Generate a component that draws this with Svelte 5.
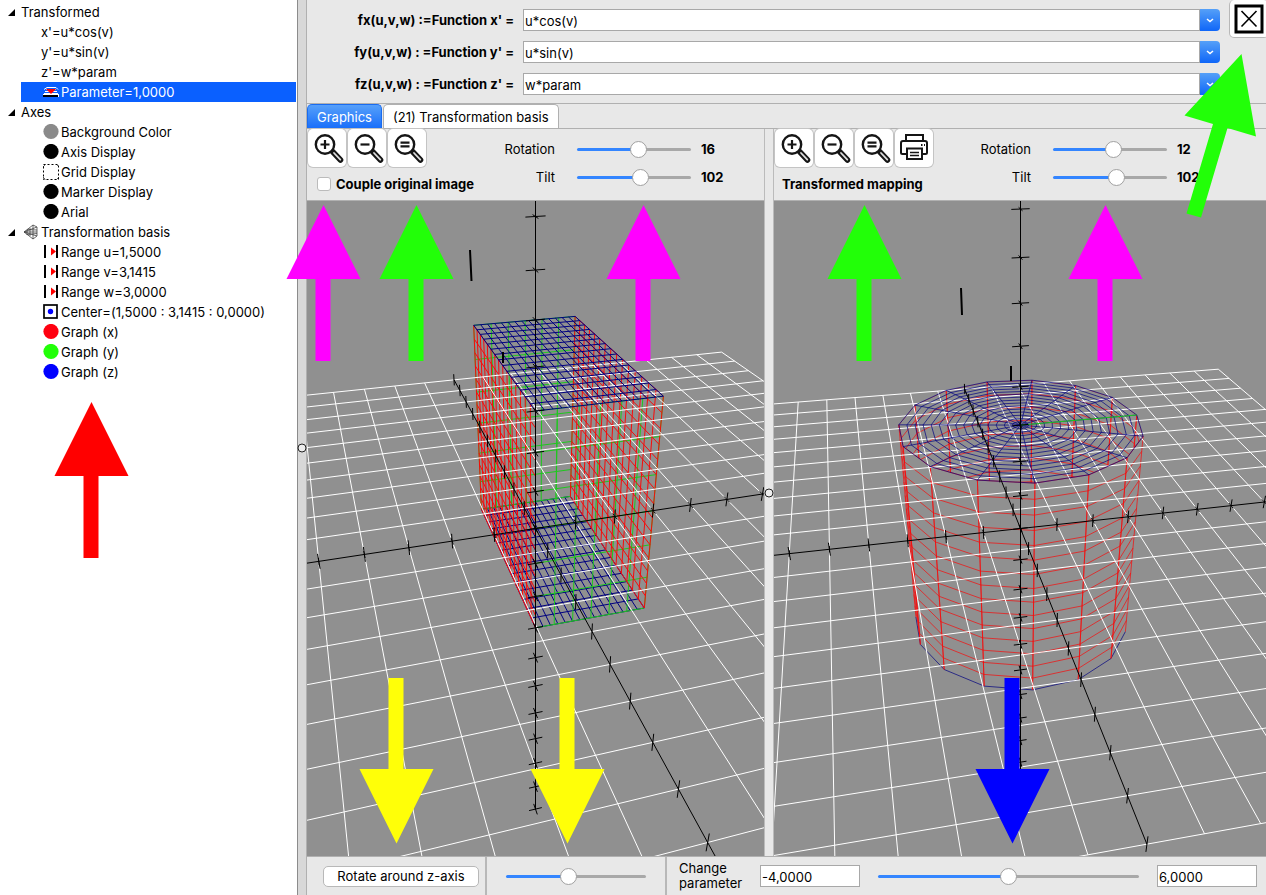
<script>
    let functions = [
        { id: 'fx', label: "fx(u,v,w) :=Function x' =", value: 'u*cos(v)' },
        { id: 'fy', label: "fy(u,v,w) : =Function y' =", value: 'u*sin(v)' },
        { id: 'fz', label: "fz(u,v,w) : =Function z' =", value: 'w*param' }
    ]

    let tree = [
        { text: 'Transformed', level: 0 },
        { text: "x'=u*cos(v)", level: 1 },
        { text: "y'=u*sin(v)", level: 1 },
        { text: "z'=w*param", level: 1 },
        { text: 'Parameter=1,0000', level: 1, icon: 'param', selected: true },
        { text: 'Axes', level: 0 },
        { text: 'Background Color', level: 1, icon: 'dot', color: '#8a8a8a' },
        { text: 'Axis Display', level: 1, icon: 'dot', color: '#000' },
        { text: 'Grid Display', level: 1, icon: 'grid' },
        { text: 'Marker Display', level: 1, icon: 'dot', color: '#000' },
        { text: 'Arial', level: 1, icon: 'dot', color: '#000' },
        { text: 'Transformation basis', level: 0, icon: 'basis' },
        { text: 'Range u=1,5000', level: 1, icon: 'range' },
        { text: 'Range v=3,1415', level: 1, icon: 'range' },
        { text: 'Range w=3,0000', level: 1, icon: 'range' },
        { text: 'Center=(1,5000 : 3,1415 : 0,0000)', level: 1, icon: 'center' },
        { text: 'Graph (x)', level: 1, icon: 'dot', color: '#ff0010' },
        { text: 'Graph (y)', level: 1, icon: 'dot', color: '#22ff08' },
        { text: 'Graph (z)', level: 1, icon: 'dot', color: '#0000ff' }
    ]

    let views = $state([
        { id: 'original', title: 'Couple original image', rotation: 16, tilt: 102 },
        { id: 'mapped', title: 'Transformed mapping', rotation: 12, tilt: 102 }
    ])
    let coupled = $state(false)
    let spin = $state(44)
    let param = $state(1)

    // central projection: each axis has a screen direction and a depth factor
    const cameras = {
        original: { o: [228.5, 327.5], x: [40.65, -6.17, 0.01242], y: [11.68, 21.3, -0.04328], z: [0, -35.88, -0.02786] },
        mapped: { o: [246.5, 327.5], x: [36.73, -3.99, 0.00779], y: [7.75, 19.35, -0.0387], z: [0, -31.86, -0.02526] }
    }

    function project(cam, x, y, z) {
        const d = 1 + cam.x[2] * x + cam.y[2] * y + cam.z[2] * z
        return [
            cam.o[0] + (cam.x[0] * x + cam.y[0] * y + cam.z[0] * z) / d,
            cam.o[1] + (cam.x[1] * x + cam.y[1] * y + cam.z[1] * z) / d
        ]
    }

    function path(cam, points) {
        return 'M' + points.map((p) => project(cam, ...p).map((n) => n.toFixed(1)).join(' ')).join('L')
    }

    const steps = (from, to, n) => Array.from({ length: n + 1 }, (_, i) => from + ((to - from) * i) / n)

    function gridPath(cam) {
        return steps(-10, 10, 20)
            .filter((t) => t != 0)
            .map((t) => path(cam, [[t, -10, 0], [t, 10, 0]]) + path(cam, [[-10, t, 0], [10, t, 0]]))
            .join('')
    }

    function axesPath(cam) {
        let d = path(cam, [[-10, 0, 0], [10, 0, 0]]) + path(cam, [[0, -10, 0], [0, 10, 0]]) + path(cam, [[0, 0, -10], [0, 0, 10]])
        for (let t = -10; t <= 10; t++) {
            d += path(cam, [[t, 0, -0.2], [t, 0, 0.2]])
            d += path(cam, [[0, t, -0.2], [0, t, 0.2]])
            d += path(cam, [[-0.2, 0, t], [0.2, 0, t]])
            d += path(cam, [[t, -0.15, 0], [t, 0.15, 0]])
            d += path(cam, [[0, -0.2, t], [0, 0.2, t]])
        }
        return d
    }

    function boxPaths(cam) {
        const us = steps(0, 3, 15)
        const vs = steps(0, -2 * Math.PI, 15)
        const ws = steps(-3, 3, 15)
        const far = -2 * Math.PI
        const lid = (z) => us.map((u) => path(cam, [[u, 0, z], [u, far, z]])).join('') + vs.map((v) => path(cam, [[0, v, z], [3, v, z]])).join('')
        const wall = (u) => vs.map((v) => path(cam, [[u, v, -3], [u, v, 3]])).join('') + ws.map((w) => path(cam, [[u, 0, w], [u, far, w]])).join('')
        const face = (v) => steps(0, 3, 6).map((u) => path(cam, [[u, v, -3], [u, v, 3]])).join('') + steps(-3, 3, 6).map((w) => path(cam, [[0, v, w], [3, v, w]])).join('')
        return { bottom: lid(-3), top: lid(3), walls: wall(0) + wall(3), faces: face(0) + face(far) }
    }

    function cylinderPaths(cam) {
        const n = 15
        const at = (i, u, w) => {
            const v = (2 * Math.PI * i) / n
            return [u * Math.cos(v), -u * Math.sin(v), w]
        }
        const ring = (u, w) => path(cam, steps(0, n, n).map((i) => at(i, u, w)))
        let lid = ''
        let front = ''
        let back = ''
        let rim = ''
        for (const u of steps(0.2, 3, 14)) lid += ring(u, 3)
        for (let i = 0; i < n; i++) {
            lid += path(cam, [at(0, 0, 3), at(i, 3, 3)])
            const a = project(cam, ...at(i, 3, 3))
            const b = project(cam, ...at(i + 1, 3, 3))
            const c = project(cam, ...at(i, 3, -3))
            const facing = (b[0] - a[0]) * (c[1] - a[1]) - (b[1] - a[1]) * (c[0] - a[0]) > 0
            let side = path(cam, [at(i, 3, 3), at(i, 3, -3)]) + path(cam, [at(i + 1, 3, 3), at(i + 1, 3, -3)])
            for (const w of steps(-2.6, 3, 14)) side += path(cam, [at(i, 3, w), at(i + 1, 3, w)])
            if (facing) {
                front += side
                rim += path(cam, [at(i, 3, -3), at(i + 1, 3, -3)])
            } else {
                back += side
            }
        }
        return { lid, front, back, rim, outline: ring(3, 3) + 'Z', seam: path(cam, [[0, 0, 3], [3, 0, 3]]) }
    }

    const box = boxPaths(cameras.original)
    const cylinder = cylinderPaths(cameras.mapped)

    let arrows = [
        { x: 286, y: 205, color: '#ff00ff', dir: 'up' },
        { x: 379, y: 205, color: '#22ff08', dir: 'up' },
        { x: 606, y: 205, color: '#ff00ff', dir: 'up' },
        { x: 827, y: 205, color: '#22ff08', dir: 'up' },
        { x: 1068, y: 205, color: '#ff00ff', dir: 'up' },
        { x: 54, y: 402, color: '#ff0000', dir: 'up' },
        { x: 359, y: 678, color: '#ffff08', dir: 'down' },
        { x: 530, y: 678, color: '#ffff08', dir: 'down' },
        { x: 975, y: 678, color: '#0000ff', dir: 'down' }
    ]
</script>

{#snippet lens(sign)}
    <svg width="38" height="38" viewBox="0 0 38 38" fill="none" stroke="#151515">
        <path d="M24.5 22.5L32.5 31" stroke-width="5.6" stroke-linecap="round" />
        <path d="M26 24L32.3 30.7" stroke="#ddd" stroke-width="1.8" stroke-linecap="round" />
        <circle cx="17" cy="15.5" r="9.2" stroke-width="2.4" fill="#fff" />
        {#if sign == 'plus'}
            <path d="M12.5 15.5h9M17 11v9" stroke-width="2.2" />
        {:else if sign == 'minus'}
            <path d="M12.5 15.5h9" stroke-width="2.2" />
        {:else}
            <path d="M12.5 13.7h9M12.5 17.3h9" stroke-width="2.2" />
        {/if}
    </svg>
{/snippet}

{#snippet slider(label, view, key, min, max)}
    <label for="{view.id}-{key}">{label}</label>
    <input type="range" id="{view.id}-{key}" {min} {max} bind:value={view[key]} style="--fill: {((view[key] - min) / (max - min)) * 100}%">
    <output for="{view.id}-{key}">{view[key]}</output>
{/snippet}

<div class="app">
    <aside>
        <ul>
            {#each tree as node}
                <li class:root={node.level == 0} class:selected={node.selected}>
                    {#if node.level == 0}
                        <svg class="twisty" width="7" height="7" viewBox="0 0 7 7"><path d="M7 0V7H0z" /></svg>
                    {/if}
                    <span class="node">
                        {#if node.icon}
                            <svg class="icon" width="16" height="16" viewBox="0 0 16 16">
                                {#if node.icon == 'dot'}
                                    <circle cx="8" cy="7.5" r="7.6" fill={node.color} />
                                {:else if node.icon == 'param'}
                                    <path d="M1 9.500h14M2 7.500h12M3 5.500h10M1 5.500L4 3.500h9l2 2" fill="none" stroke="#fff" stroke-width="1" />
                                    <path d="M3 5h10L8 10z" fill="#f00" />
                                    <path d="M0 10h16v3H0z" fill="#fff" />
                                    <path d="M0 11h15v2H0z" fill="#000" />
                                {:else if node.icon == 'grid'}
                                    <rect x="0.500" y="0.500" width="15" height="15" fill="none" stroke="#000" stroke-dasharray="2 2" />
                                    <path d="M0 3L3 0M13 0l3 3M0 13l3 3M16 13l-3 3" stroke="#000" stroke-dasharray="1 1" />
                                {:else if node.icon == 'basis'}
                                    <path d="M1 8L10 1 14 3V12L10 15zM1 8h13M4 6v5M7 4v8M10 1v14M1 8L14 3M1 8L14 12M4 5.600L14 6M4 10.500L14 9.500" fill="none" stroke="#444" stroke-width="0.800" />
                                {:else if node.icon == 'range'}
                                    <path d="M2 1v13M14 1v13" stroke="#000" stroke-width="2" />
                                    <path d="M8 3.500L13 7.500 8 11.500z" fill="#f00" />
                                {:else}
                                    <rect x="1" y="1" width="13" height="13" fill="#fff" stroke="#000" stroke-width="1.700" />
                                    <circle cx="7.500" cy="7.500" r="2.700" fill="#00f" />
                                {/if}
                            </svg>
                        {/if}
                        {node.text}
                    </span>
                </li>
            {/each}
        </ul>
    </aside>
    <div class="splitter"><span class="grip"></span></div>

    <main>
        <header>
            <form>
                {#each functions as fn}
                    <label for={fn.id}>{fn.label}</label>
                    <div class="combo">
                        <input type="text" id={fn.id} bind:value={fn.value}>
                        <button type="button" aria-label="Choose function">
                            <svg width="8" height="5" viewBox="0 0 8 5"><path d="M1 1l3 2.500L7 1" fill="none" stroke="#fff" stroke-width="1.500" /></svg>
                        </button>
                    </div>
                {/each}
            </form>
            <button class="close" aria-label="Close">
                <svg width="30" height="30" viewBox="0 0 30 30" fill="none" stroke="#000">
                    <rect x="2" y="2" width="26" height="26" stroke-width="3" />
                    <path d="M7.500 7L22.500 22.500M22.500 7L7.500 22.500" stroke-width="1.600" />
                </svg>
            </button>
        </header>

        <nav>
            <button class="tab active">Graphics</button>
            <button class="tab">(21) Transformation basis</button>
        </nav>

        <div class="views">
            {#each views as view}
                {@const cam = cameras[view.id]}
                <section class={view.id}>
                    <div class="toolbar">
                        <div class="tools">
                            <div class="buttons">
                                <button aria-label="Zoom in">{@render lens('plus')}</button>
                                <button aria-label="Zoom out">{@render lens('minus')}</button>
                                <button aria-label="Reset zoom">{@render lens('equal')}</button>
                                {#if view.id == 'mapped'}
                                    <button aria-label="Print">
                                        <svg width="38" height="38" viewBox="0 0 38 38" fill="none" stroke="#151515" stroke-width="2">
                                            <path d="M11 12V6h17v6" />
                                            <path d="M11 25H7.500q-1.500 0-1.500-1.500V14q0-2 2-2h22q2 0 2 2v9.500q0 1.500-1.500 1.500H28" />
                                            <path d="M12 19.500h15v10.500H12z" />
                                            <path d="M15 23.500h9M15 26.500h9" stroke-width="1.600" />
                                            <path d="M26 16h1.500M29 16h1" />
                                        </svg>
                                    </button>
                                {/if}
                            </div>
                            {#if view.id == 'original'}
                                <label class="title"><input type="checkbox" bind:checked={coupled}>{view.title}</label>
                            {:else}
                                <span class="title">{view.title}</span>
                            {/if}
                        </div>
                        <div class="sliders">
                            {@render slider('Rotation', view, 'rotation', -180, 180)}
                            {@render slider('Tilt', view, 'tilt', 0, 180)}
                        </div>
                    </div>
                    <div class="canvas">
                        {#if view.id == 'original'}
                            <svg viewBox="0 0 457 655" preserveAspectRatio="xMidYMid slice" fill="none">
                                <path class="blue" d={box.bottom} />
                                <path class="green" d={box.faces} />
                                <path class="red" d={box.walls} />
                                <path class="grid" d={gridPath(cam)} />
                                <path class="blue" d={box.top} />
                                <path class="axis" d={axesPath(cam)} />
                                <path class="axis bold" d="M163 49L164.500 80M196 151V162" />
                            </svg>
                        {:else}
                            <svg viewBox="0 0 492 655" preserveAspectRatio="xMidYMid slice" fill="none">
                                <clipPath id="lid"><path d={cylinder.outline} /></clipPath>
                                <path class="red" d={cylinder.back} clip-path="url(#lid)" />
                                <path class="blue" d={cylinder.rim} />
                                <path class="red" d={cylinder.front} />
                                <path class="grid" d={gridPath(cam)} />
                                <path class="blue" d={cylinder.lid} />
                                <path class="green" d={cylinder.seam} />
                                <path class="axis" d={axesPath(cam)} />
                                <path class="axis bold" d="M187 87L188 114M237 165V180" />
                            </svg>
                        {/if}
                    </div>
                </section>
                {#if view.id == 'original'}
                    <div class="divider"><span class="grip"></span></div>
                {/if}
            {/each}
        </div>

        <footer>
            <div class="cell">
                <button class="rotate">Rotate around z-axis</button>
            </div>
            <div class="cell">
                <input type="range" aria-label="Rotation angle" bind:value={spin} style="--fill: {spin}%">
            </div>
            <div class="cell change">
                <label for="param">Change parameter</label>
                <input type="text" aria-label="Minimum" value="-4,0000">
                <input type="range" id="param" min="-4" max="6" step="0.1" bind:value={param} style="--fill: {(param + 4) * 10}%">
                <input type="text" aria-label="Maximum" value="6,0000">
            </div>
        </footer>
    </main>

    {#each arrows as arrow}
        <svg class="arrow" width="75" height="166" style="left: {arrow.x}px; top: {arrow.y}px" fill={arrow.color}>
            {#if arrow.dir == 'up'}
                <path d="M37.500 0L74.500 74H44.500V156H29.500V74H0.500z" />
            {:else}
                <path d="M29.500 0H44.500V91H74.500L37.500 165.500L0.500 91H29.500z" />
            {/if}
        </svg>
    {/each}
    <svg class="arrow" width="74" height="166" style="left: 1184px; top: 53px" fill="#22ff08">
        <path d="M57.500 1L72 83.500L43.500 75L17 164.500L2.500 160.500L29 71L0.500 62.500z" />
    </svg>
</div>

<style>
    :global(body) {
        margin: 0;
        overflow: hidden;
    }

    .app {
        position: relative;
        display: flex;
        height: 100vh;
        overflow: hidden;
        background: #e8e8e8;
        color: #000;
        font-family: Inter, "Liberation Sans", sans-serif;
        font-size: 13px;
    }

    button, input {
        box-sizing: border-box;
        margin: 0;
        padding: 0;
        font: inherit;
        color: inherit;
    }

    svg {
        display: block;
    }

    aside {
        flex: 0 0 297px;
        background: #fff;
        border-right: 1px solid #8c8c8c;
    }

    ul {
        margin: 0;
        padding: 2px 1px 0 0;
        list-style: none;
    }

    li {
        display: flex;
        align-items: center;
        height: 20px;
        margin-left: 21px;
        padding-left: 20px;
        white-space: nowrap;
    }

    li.root {
        margin-left: 8px;
        padding-left: 0;
        gap: 6px;
    }

    li.selected {
        background: #0a60ff;
        color: #fff;
    }

    .node {
        display: flex;
        align-items: center;
        gap: 2px;
        line-height: 20px;
    }

    .icon {
        margin-left: 2px;
    }

    .splitter {
        position: relative;
        flex: 0 0 8px;
        background: #d8d8d8;
    }

    .grip {
        position: absolute;
        left: 50%;
        top: 50%;
        z-index: 2;
        width: 7px;
        height: 7px;
        border: 1px solid #222;
        border-radius: 50%;
        background: #eee;
        transform: translate(-50%, -50%);
    }

    main {
        flex: 1;
        display: flex;
        flex-direction: column;
        min-width: 0;
        border-left: 1px solid #b0b0b0;
    }

    header {
        display: flex;
        align-items: flex-start;
        gap: 9px;
        height: 103px;
        border-bottom: 1px solid #b0b0b0;
    }

    form {
        flex: 1;
        display: grid;
        grid-template-columns: 207px 1fr;
        column-gap: 9px;
        row-gap: 10px;
        align-items: center;
        padding-top: 9px;
    }

    form label {
        font-weight: 700;
        text-align: right;
        white-space: nowrap;
    }

    .combo {
        display: flex;
        height: 22px;
    }

    input[type="text"] {
        min-width: 0;
        height: 22px;
        border: 1px solid #a8a8a8;
        border-radius: 0;
        background: #fff;
        padding-left: 1px;
        padding-top: 2px;
    }

    .combo input {
        flex: 1;
    }

    .combo button {
        display: grid;
        place-items: center;
        width: 20px;
        border: 0;
        border-radius: 0 4px 4px 0;
        background: linear-gradient(#55a0f8, #0f66f8);
    }

    .close {
        flex: 0 0 40px;
        display: grid;
        place-items: center;
        height: 38px;
        margin-right: -3px;
        border: 1px solid #b8b8b8;
        border-top: 0;
        border-radius: 5px;
        background: #fff;
    }

    nav {
        display: flex;
        gap: 1px;
        height: 24px;
        border-bottom: 1px solid #b0b0b0;
    }

    .tab {
        height: 24px;
        padding: 1px 9px 0;
        border: 1px solid #b0b0b0;
        border-bottom: 0;
        border-radius: 5px 5px 0 0;
        background: #fff;
    }

    .tab.active {
        border-color: #1a6cf0;
        background: linear-gradient(#56a0fa, #1a6ffa);
        color: #fff;
    }

    .views {
        flex: 1;
        display: flex;
        min-height: 0;
    }

    section {
        display: flex;
        flex-direction: column;
        min-width: 0;
    }

    .original {
        flex: 457 1 0;
    }

    .mapped {
        flex: 492 1 0;
    }

    .divider {
        position: relative;
        flex: 0 0 8px;
        border-left: 1px solid #bbb;
        border-right: 1px solid #bbb;
        background: #e8e8e8;
    }

    .toolbar {
        display: flex;
        height: 71px;
        border-bottom: 1px solid #b0b0b0;
    }

    .tools {
        flex: 0 0 168px;
    }

    .mapped .tools {
        flex-basis: 177px;
    }

    .buttons {
        display: flex;
        gap: 2px;
        padding-left: 1px;
    }

    .buttons button {
        width: 38px;
        height: 38px;
        border: 0;
        border-radius: 5px;
        background: #fff;
        box-shadow: 0 0 0 1px #c4c4c4;
    }

    .title {
        display: flex;
        align-items: center;
        gap: 5px;
        height: 34px;
        padding-left: 8px;
        font-weight: 700;
        white-space: nowrap;
    }

    label.title {
        padding-left: 10px;
    }

    input[type="checkbox"] {
        appearance: none;
        width: 14px;
        height: 14px;
        border: 1px solid #bbb;
        border-radius: 3px;
        background: #fff;
    }

    input[type="checkbox"]:checked {
        background: #1a6ffa;
    }

    .sliders {
        display: grid;
        grid-template: 28px 28px / 80px 136px 50px;
        align-items: center;
        padding-top: 6px;
    }

    .sliders label {
        text-align: right;
    }

    .sliders input {
        margin-left: 22px;
    }

    .sliders output {
        padding-left: 10px;
        font-weight: 700;
    }

    input[type="range"] {
        appearance: none;
        height: 17px;
        min-width: 0;
        background: none;
    }

    input[type="range"]::-webkit-slider-runnable-track {
        height: 3px;
        border-radius: 2px;
        background: linear-gradient(to right, #3385ff var(--fill), #a8a8a8 var(--fill));
    }

    input[type="range"]::-webkit-slider-thumb {
        appearance: none;
        box-sizing: border-box;
        width: 17px;
        height: 17px;
        margin-top: -7px;
        border: 1px solid #a0a0a0;
        border-radius: 50%;
        background: #fff;
    }

    .canvas {
        flex: 1;
        min-height: 0;
        background: #909090;
    }

    .canvas svg {
        width: 100%;
        height: 100%;
    }

    .blue {
        stroke: #000080;
    }

    .red {
        stroke: #f80a0a;
    }

    .green {
        stroke: #1ec81e;
    }

    .mapped .blue, .mapped .red {
        stroke-width: 0.7;
    }

    .grid {
        stroke: #fff;
    }

    .axis {
        stroke: #000;
    }

    .bold {
        stroke-width: 2;
    }

    footer {
        display: flex;
        height: 38px;
        border-top: 1px solid #b0b0b0;
    }

    .cell {
        display: flex;
        align-items: center;
        flex: 0 0 180px;
        border-right: 2px solid #b8b8b8;
        box-sizing: border-box;
        padding: 0 6px 0 16px;
    }

    .cell + .cell {
        padding: 0 19px;
    }

    .cell > input[type="range"] {
        flex: 1;
    }

    .cell + .change {
        flex: 1;
        gap: 18px;
        border-right: 0;
        padding: 0 9px 0 12px;
    }

    .change label {
        width: 63px;
        line-height: 15px;
    }

    .change input[type="text"] {
        width: 100px;
    }

    .rotate {
        flex: 1;
        height: 21px;
        border: 1px solid #b8b8b8;
        border-radius: 5px;
        background: #fff;
        white-space: nowrap;
    }

    .arrow {
        position: absolute;
        z-index: 3;
        pointer-events: none;
    }
</style>
